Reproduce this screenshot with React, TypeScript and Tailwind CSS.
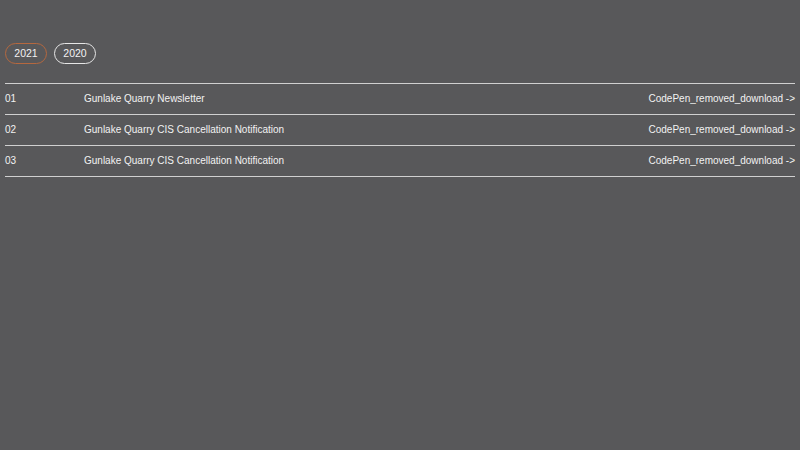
import React, { useState } from "react";

const rows = [
  { no: "01", title: "Gunlake Quarry Newsletter" },
  { no: "02", title: "Gunlake Quarry CIS Cancellation Notification" },
  { no: "03", title: "Gunlake Quarry CIS Cancellation Notification" },
];

export default function App() {
  const [year, setYear] = useState("2021");

  return (
    <div className="min-h-[450px] w-full bg-[#58585a] px-[5px] pt-[43px] text-[10px] text-[#f2f2f2] font-['Liberation_Sans',Arial,sans-serif]">
      <div className="flex gap-[7px]">
        {["2021", "2020"].map((y) => (
          <button
            key={y}
            onClick={() => setYear(y)}
            className={`h-[21px] w-[42px] rounded-full border text-[10.5px] leading-none ${
              year === y ? "border-[#b5683f]" : "border-[#e6e6e6]"
            }`}
          >
            {y}
          </button>
        ))}
      </div>
      <div className="mt-[19px] border-t border-[#d0d0d0]">
        {rows.map((row) => (
          <div
            key={row.no}
            className="flex h-[31px] items-center border-b border-[#d0d0d0] pb-[1px]"
          >
            <span className="w-[79px]">{row.no}</span>
            <span className="flex-1">{row.title}</span>
            <span>CodePen_removed_download -&gt;</span>
          </div>
        ))}
      </div>
    </div>
  );
}
